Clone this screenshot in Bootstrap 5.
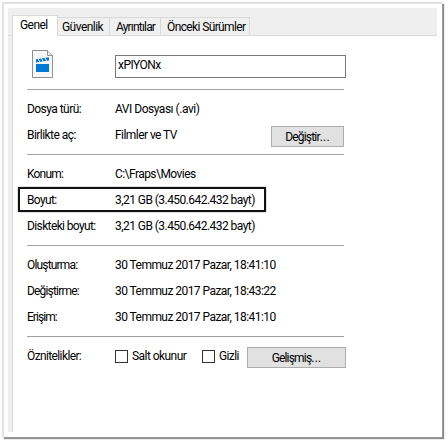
<!DOCTYPE html>
<html lang="tr">
<head>
<meta charset="utf-8">
<meta name="viewport" content="width=device-width, initial-scale=1">
<title>xPIYONx Özellikleri</title>
<link href="https://cdn.jsdelivr.net/npm/bootstrap@5.3.0/dist/css/bootstrap.min.css" rel="stylesheet">
<style>
html{overflow:hidden}
body{height:443px;padding:4px 0 0 4px;font:12px/16px Roboto,"Liberation Sans",sans-serif;color:#000;background:#fff;white-space:nowrap}
.sheet{width:438px;height:433px;padding:4px 5px 5px 4px;background:#fff;box-shadow:-1px -1px 1px 1px #e2e2e2,1px 1px 1px 1px #8c8c8c}
.frame{height:424px;background:#efefef}
.prop-tabs{height:28px;padding:7px 0 0 4px;border-bottom:1px solid #d9d9d9}
.prop-tab{height:18px;border:1px solid #d9d9d9;border-left:0;border-bottom:0;background:#f0f0f0;padding:1px 0 0 4px}
.prop-tab.current{width:46px;height:21px;margin-bottom:-1px;border-left:1px solid #d9d9d9;background:#fff;padding:1px 0 0 7px}
.w-sec{width:52px}.w-det{width:51px;padding-left:6px}.w-old{width:89px;padding-left:6px}
.pane{height:396px;margin-left:4px;border-left:1px solid #d9d9d9;background:#fff;padding:13px 0 0 14px}
.head-row{height:40px;padding-left:5px}
.file-icon{margin-top:1px}
.name-box{width:231px;height:23px;margin:6px 0 0 62px;border:1px solid #7a7a7a;padding:1px 0 0 2px}
.rule{width:317px;height:1px;background:#a0a0a0}
.group{padding:6px 0}
.prop-row{height:26px;width:317px}
.prop-row.wide{width:319px}
.prop-label{width:88px}
.win-btn{height:21px;border:1px solid #adadad;background:#e1e1e1;padding:0;margin-top:3px;text-align:center}
.dots{letter-spacing:.2px}
.tick{width:13px;height:13px;border:1px solid #333;background:#fff;margin-top:1px}
.marked{position:relative}
.marked::after{content:"";position:absolute;left:-9px;top:0;width:248px;height:25px;border:2px solid #111;box-shadow:0 0 1px #555}
.k4{letter-spacing:-.48px}.k5{letter-spacing:-.55px}.k6{letter-spacing:-.62px}.k7{letter-spacing:-.8px}.k8{letter-spacing:-.82px}.k9{letter-spacing:-.95px}
</style>
<script src="https://cdn.jsdelivr.net/npm/bootstrap@5.3.0/dist/js/bootstrap.bundle.min.js"></script>
</head>
<body>
<main class="sheet">
<div class="frame">
  <div class="prop-tabs d-flex align-items-end" role="tablist">
    <div class="prop-tab current k5" role="tab">Genel</div>
    <div class="prop-tab w-sec k5" role="tab">Güvenlik</div>
    <div class="prop-tab w-det k8" role="tab">Ayrıntılar</div>
    <div class="prop-tab w-old k6" role="tab">Önceki Sürümler</div>
  </div>
  <div class="pane">
    <div class="head-row d-flex align-items-start">
      <svg class="file-icon" width="21" height="28" viewBox="0 0 21 28">
        <path d="M.5.5h15l5 5v22H.5z" fill="#f7f7f7" stroke="#909090"/>
        <path d="M15.5.5v5h5" fill="#e8e8e8" stroke="#909090"/>
        <path d="M4 14h13v8H4z" fill="#0078d7"/>
        <path d="M4 9.3l13-2v3.2L4 12.5z" fill="#0078d7"/>
        <path d="M6 8.5l2 4M9.4 8l2 4M12.8 7.5l2 4" stroke="#f7f7f7" stroke-width="1"/>
      </svg>
      <div class="name-box k5">xPIYONx</div>
    </div>
    <div class="rule"></div>
    <section class="group">
      <div class="prop-row d-flex align-items-center"><span class="prop-label k5">Dosya türü:</span><span class="k4">AVI Dosyası (.avi)</span></div>
      <div class="prop-row d-flex align-items-center"><span class="prop-label k5">Birlikte aç:</span><span class="k5">Filmler ve TV</span><button class="win-btn ms-auto k7" style="width:73px">Değiştir<span class="dots">...</span></button></div>
    </section>
    <div class="rule"></div>
    <section class="group">
      <div class="prop-row d-flex align-items-center"><span class="prop-label k8">Konum:</span><span class="k5">C:\Fraps\Movies</span></div>
      <div class="prop-row d-flex align-items-center marked"><span class="prop-label k6">Boyut:</span><span class="k5">3,21 GB (3.450.642.432 bayt)</span></div>
      <div class="prop-row d-flex align-items-center"><span class="prop-label k6">Diskteki boyut:</span><span class="k5">3,21 GB (3.450.642.432 bayt)</span></div>
    </section>
    <div class="rule"></div>
    <section class="group">
      <div class="prop-row d-flex align-items-center"><span class="prop-label k8">Oluşturma:</span><span class="k5">30 Temmuz 2017 Pazar, 18:41:10</span></div>
      <div class="prop-row d-flex align-items-center"><span class="prop-label k8">Değiştirme:</span><span class="k5">30 Temmuz 2017 Pazar, 18:43:22</span></div>
      <div class="prop-row d-flex align-items-center"><span class="prop-label k9">Erişim:</span><span class="k5">30 Temmuz 2017 Pazar, 18:41:10</span></div>
    </section>
    <div class="rule"></div>
    <section class="group">
      <div class="prop-row wide d-flex align-items-center"><span class="prop-label k6">Öznitelikler:</span><span class="tick"></span><span class="k5 ps-1" style="width:74px">Salt okunur</span><span class="tick"></span><span class="k6 ps-1">Gizli</span><button class="win-btn ms-auto k8" style="width:99px">Gelişmiş<span class="dots">...</span></button></div>
    </section>
  </div>
</div>
</main>
</body>
</html>
